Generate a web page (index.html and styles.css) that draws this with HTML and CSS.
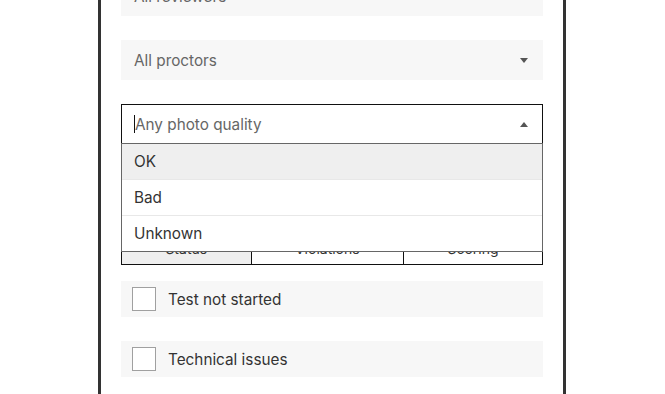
FILE: index.html
```html
<!DOCTYPE html>
<html>
<head>
<meta charset="utf-8">
<link rel="stylesheet" href="styles.css">
</head>
<body>
<div class="panel">
  <div class="field"><span class="placeholder">All reviewers</span><span class="arrow down"></span></div>
  <div class="field"><span class="placeholder">All proctors</span><span class="arrow down"></span></div>
  <div class="select-wrap">
    <div class="field open"><span class="caret"></span><span class="placeholder">Any photo quality</span><span class="arrow up"></span></div>
    <ul class="menu">
      <li class="option active">OK</li>
      <li class="option">Bad</li>
      <li class="option">Unknown</li>
    </ul>
  </div>
  <div class="field"><span class="placeholder">Any date</span><span class="arrow down"></span></div>
  <div class="tabs">
    <div class="tab selected">Status</div>
    <div class="tab">Violations</div>
    <div class="tab">Scoring</div>
  </div>
  <div class="check-list">
    <label class="check-row"><span class="box"></span><span class="check-label">Test not started</span></label>
    <label class="check-row"><span class="box"></span><span class="check-label">Technical issues</span></label>
  </div>
</div>
</body>
</html>
```

FILE: styles.css
```css
html, body {
  margin: 0;
  padding: 0;
  background: #ffffff;
  overflow: hidden;
}
body {
  font-family: Inter, "Noto Sans", sans-serif;
  color: #333333;
}
.panel {
  width: 422px;
  margin-left: 98px;
  margin-top: -24px;
  border-left: 3px solid #333333;
  border-right: 3px solid #333333;
  padding: 0 20px 40px;
  box-sizing: content-box;
  display: flex;
  flex-direction: column;
  gap: 24px;
}
.field {
  height: 40px;
  background: #f7f7f7;
  display: flex;
  align-items: center;
  padding: 0 15px 0 13px;
  box-sizing: border-box;
  font-size: 15.3px;
}
.placeholder {
  color: #666666;
  flex: 1;
}
.arrow {
  width: 0;
  height: 0;
  border-left: 4px solid transparent;
  border-right: 4px solid transparent;
}
.arrow.down {
  border-top: 5px solid #555555;
}
.arrow.up {
  border-bottom: 5px solid #555555;
}
.select-wrap {
  position: relative;
}
.field.open {
  background: #ffffff;
  border: 1px solid #111111;
  padding-left: 12px;
  padding-right: 14px;
}
.caret {
  width: 1px;
  height: 18px;
  background: #111111;
}
.menu {
  position: absolute;
  left: 0;
  right: 0;
  top: 39px;
  margin: 0;
  padding: 0;
  list-style: none;
  background: #ffffff;
  border: 1px solid #666666;
  z-index: 2;
}
.option {
  height: 36px;
  display: flex;
  align-items: center;
  padding-left: 12px;
  font-size: 15.3px;
  color: #333333;
  border-bottom: 1px solid #e8e8e8;
  box-sizing: border-box;
}
.option:last-child {
  border-bottom: none;
  height: 35px;
}
.option.active {
  background: #efefef;
}
.tabs {
  display: flex;
  border: 1px solid #111111;
  height: 33px;
  box-sizing: border-box;
}
.tab {
  flex: 1 1 auto;
  display: flex;
  align-items: center;
  justify-content: center;
  font-size: 14px;
  color: #333333;
  border-left: 1px solid #111111;
}
.tab:first-child {
  border-left: none;
}
.tab.selected {
  background: #efefef;
}
.check-list {
  display: flex;
  flex-direction: column;
  gap: 24px;
  margin-top: -8px;
}
.check-row {
  height: 36px;
  background: #f7f7f7;
  display: flex;
  align-items: center;
  padding-left: 11px;
  font-size: 15.3px;
}
.box {
  width: 24px;
  height: 24px;
  box-sizing: border-box;
  border: 1px solid #a0a0a0;
  background: #ffffff;
  margin-right: 12px;
}
.check-label {
  color: #333333;
}
```
